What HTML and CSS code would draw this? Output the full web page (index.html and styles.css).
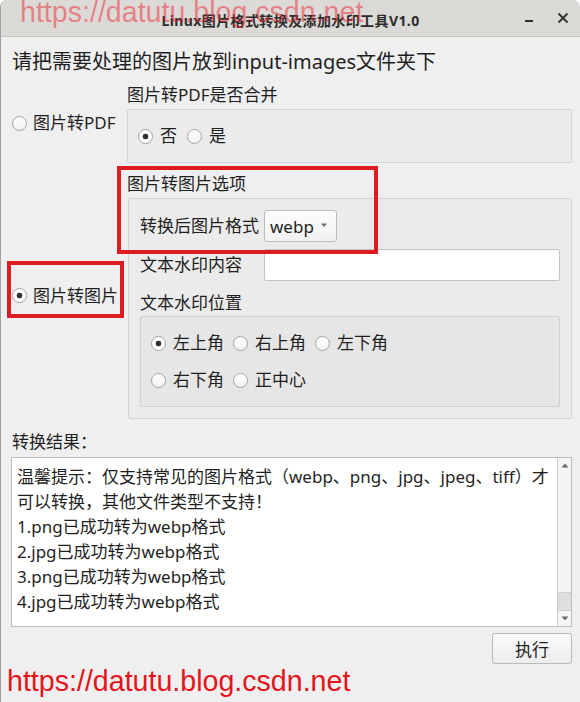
FILE: index.html
```html
<!DOCTYPE html>
<html lang="zh-CN">
<head>
<meta charset="utf-8">
<title>Linux图片格式转换及添加水印工具V1.0</title>
<link rel="stylesheet" href="styles.css">
</head>
<body>
<div class="window">
  <header class="titlebar">
    <span class="title">Linux图片格式转换及添加水印工具V1.0</span>
    <div class="controls">
      <svg class="ctl" width="16" height="16" viewBox="0 0 16 16"><rect x="4" y="8" width="8" height="2" fill="#2f2f2f"/></svg>
      <svg class="ctl" width="16" height="16" viewBox="0 0 16 16"><path d="M3.5 1.5 L12.5 10.5 M12.5 1.5 L3.5 10.5" stroke="#2f2f2f" stroke-width="1.8" fill="none"/></svg>
    </div>
  </header>

  <main class="content">
    <div class="heading">请把需要处理的图片放到input-images文件夹下</div>

    <div class="modes">
      <label class="radio mode">图片转PDF</label>
      <section class="group">
        <div class="group-title">图片转PDF是否合并</div>
        <div class="frame frame-pdf">
          <span class="radio on">否</span>
          <span class="radio">是</span>
        </div>
      </section>

      <label class="radio mode on">图片转图片</label>
      <section class="group">
        <div class="group-title">图片转图片选项</div>
        <div class="frame frame-img">
          <div class="form-grid">
            <span class="field-label">转换后图片格式</span>
            <div class="combo"><span>webp</span><svg width="8" height="5" viewBox="0 0 8 5"><path d="M1 0.5 L7 0.5 L4 4 Z" fill="#6a6a6a"/></svg></div>
            <span class="field-label">文本水印内容</span>
            <div class="input"></div>
          </div>
          <div class="sub-title">文本水印位置</div>
          <div class="frame inner">
            <div class="radio-row">
              <span class="radio on">左上角</span>
              <span class="radio">右上角</span>
              <span class="radio">左下角</span>
            </div>
            <div class="radio-row">
              <span class="radio">右下角</span>
              <span class="radio">正中心</span>
            </div>
          </div>
        </div>
      </section>
    </div>

    <div class="result-label">转换结果：</div>
    <div class="textarea">
      <div class="text">
        <div class="line">温馨提示：仅支持常见的图片格式（webp、png、jpg、jpeg、tiff）才</div>
        <div class="line">可以转换，其他文件类型不支持！</div>
        <div class="line">1.png已成功转为webp格式</div>
        <div class="line">2.jpg已成功转为webp格式</div>
        <div class="line">3.png已成功转为webp格式</div>
        <div class="line">4.jpg已成功转为webp格式</div>
      </div>
      <div class="scrollbar">
        <div class="sb-btn"><svg width="8" height="5" viewBox="0 0 8 5"><path d="M0.5 4.5 L7.5 4.5 L4 0.5 Z" fill="#6a6a6a"/></svg></div>
        <div class="sb-track"><div class="sb-thumb"></div></div>
        <div class="sb-btn"><svg width="8" height="5" viewBox="0 0 8 5"><path d="M0.5 0.5 L7.5 0.5 L4 4.5 Z" fill="#6a6a6a"/></svg></div>
      </div>
    </div>

    <div class="actions">
      <button class="btn" type="button">执行</button>
    </div>
  </main>

  <div class="mark mark-top">https://datutu.blog.csdn.net</div>
  <div class="mark mark-bottom">https://datutu.blog.csdn.net</div>
  <div class="annot annot-1"></div>
  <div class="annot annot-2"></div>
</div>
</body>
</html>
```

FILE: styles.css
```css
* { box-sizing: border-box; margin: 0; padding: 0; }

html, body {
  width: 580px;
  height: 702px;
  overflow: hidden;
  background: #ffffff;
}

body {
  font-family: "Noto Sans", "Noto Sans CJK SC", sans-serif;
  color: #1f1f1f;
}

.window {
  position: relative;
  width: 580px;
  height: 702px;
  background: #efefef;
  border-left: 1px solid #9f9f9f;
  border-radius: 7px 7px 0 0;
  overflow: hidden;
}

/* title bar */
.titlebar {
  height: 37px;
  padding-top: 4px;
  background: #dcdad7;
  border-bottom: 1px solid #c4c2bf;
  display: grid;
  grid-template-columns: 1fr auto 1fr;
  align-items: center;
}

.title {
  grid-column: 2;
  font-family: "Noto Sans", "Noto Sans CJK SC", sans-serif;
  font-weight: 700;
  font-size: 14px;
  letter-spacing: 0.4px;
  color: #2c2c2c;
  white-space: nowrap;
}

.controls {
  grid-column: 3;
  justify-self: end;
  display: flex;
  gap: 18px;
  padding-right: 9px;
}

.ctl { display: block; }

/* content */
.content {
  padding: 11px 8px 0 11px;
}

.heading {
  font-size: 20px;
  line-height: 28px;
  white-space: nowrap;
}

.modes {
  margin-top: 7px;
  display: grid;
  grid-template-columns: 115px 1fr;
  row-gap: 9px;
  align-items: center;
}

.radio {
  display: inline-flex;
  align-items: center;
  gap: 7px;
  font-size: 17px;
  line-height: 24px;
  white-space: nowrap;
}

.radio::before {
  content: "";
  flex: none;
  width: 13px;
  height: 13px;
  border-radius: 50%;
  border: 1px solid #a3a3a3;
  background: linear-gradient(#ffffff, #f1f1f1);
}

.radio.on::before {
  background: radial-gradient(circle, #333333 0 2.6px, #ffffff 3.2px);
}

.mode { gap: 6px; }

.group-title {
  font-size: 17px;
  line-height: 24px;
  margin-bottom: 2px;
}

.frame {
  border: 1px solid #d3d3d3;
  background: #ebebeb;
  border-radius: 2px;
}

.frame-pdf {
  height: 54px;
  display: flex;
  align-items: center;
  gap: 10px;
  padding-left: 10px;
}

.frame-img {
  margin-left: 1px;
  padding: 11px;
}

.form-grid {
  display: grid;
  grid-template-columns: 124px 1fr;
  grid-auto-rows: 32px;
  row-gap: 7px;
  align-items: center;
}

.field-label {
  font-size: 17px;
  line-height: 24px;
}

.combo {
  width: 73px;
  height: 32px;
  display: flex;
  align-items: center;
  justify-content: space-between;
  padding: 0 8px 0 5px;
  border: 1px solid #bcbcbc;
  border-radius: 3px;
  background: linear-gradient(#fdfdfd, #f1f1f1);
  font-size: 17px;
}

.combo svg { display: block; margin-top: -2px; }

.input {
  height: 32px;
  background: #ffffff;
  border: 1px solid #c4c4c4;
  border-radius: 2px;
}

.sub-title {
  margin-top: 10px;
  margin-bottom: 1px;
  font-size: 17px;
  line-height: 24px;
}

.inner {
  background: #e6e6e6;
  border-color: #cfcfcf;
  padding: 14px 10px 14px 10px;
  display: flex;
  flex-direction: column;
  gap: 13px;
}

.radio-row {
  display: flex;
  gap: 9px;
}

/* results */
.result-label {
  margin-top: 11px;
  font-size: 17px;
  line-height: 24px;
}

.textarea {
  margin-top: 3px;
  margin-left: -1px;
  height: 170px;
  display: flex;
  background: #ffffff;
  border: 1px solid #bdbdbd;
}

.text {
  flex: 1;
  padding: 6px 0 0 5px;
  font-size: 17px;
  line-height: 25px;
  overflow: hidden;
}

.line { white-space: nowrap; }

.scrollbar {
  width: 14px;
  flex: none;
  display: flex;
  flex-direction: column;
  background: #f5f5f5;
  border-left: 1px solid #cdcdcd;
}

.sb-btn {
  height: 15px;
  display: flex;
  align-items: center;
  justify-content: center;
}

.sb-track {
  flex: 1;
  display: flex;
  flex-direction: column;
  justify-content: flex-end;
}

.sb-thumb {
  height: 19px;
  background: #dedede;
  border-top: 1px solid #d0d0d0;
  border-bottom: 1px solid #d0d0d0;
}

.actions {
  margin-top: 6px;
  display: flex;
  justify-content: flex-end;
}

.btn {
  width: 80px;
  height: 31px;
  border: 1px solid #bababa;
  border-radius: 3px;
  background: linear-gradient(#fbfbfb, #ececec);
  font-family: "Noto Sans", "Noto Sans CJK SC", sans-serif;
  font-size: 17px;
  color: #1f1f1f;
}

/* overlays */
.mark {
  position: absolute;
  font-family: "Liberation Sans", Arial, sans-serif;
  font-size: 28.6px;
  line-height: 28px;
  white-space: nowrap;
}

.mark-top {
  left: 19px;
  top: -2px;
  color: rgba(236, 40, 52, 0.5);
}

.mark-bottom {
  left: 6px;
  top: 667px;
  color: #e3141c;
}

.annot {
  position: absolute;
  border: 4px solid #dd1b20;
}

.annot-1 {
  left: 116px;
  top: 166px;
  width: 261px;
  height: 88px;
}

.annot-2 {
  left: 6px;
  top: 261px;
  width: 117px;
  height: 57px;
}
```
